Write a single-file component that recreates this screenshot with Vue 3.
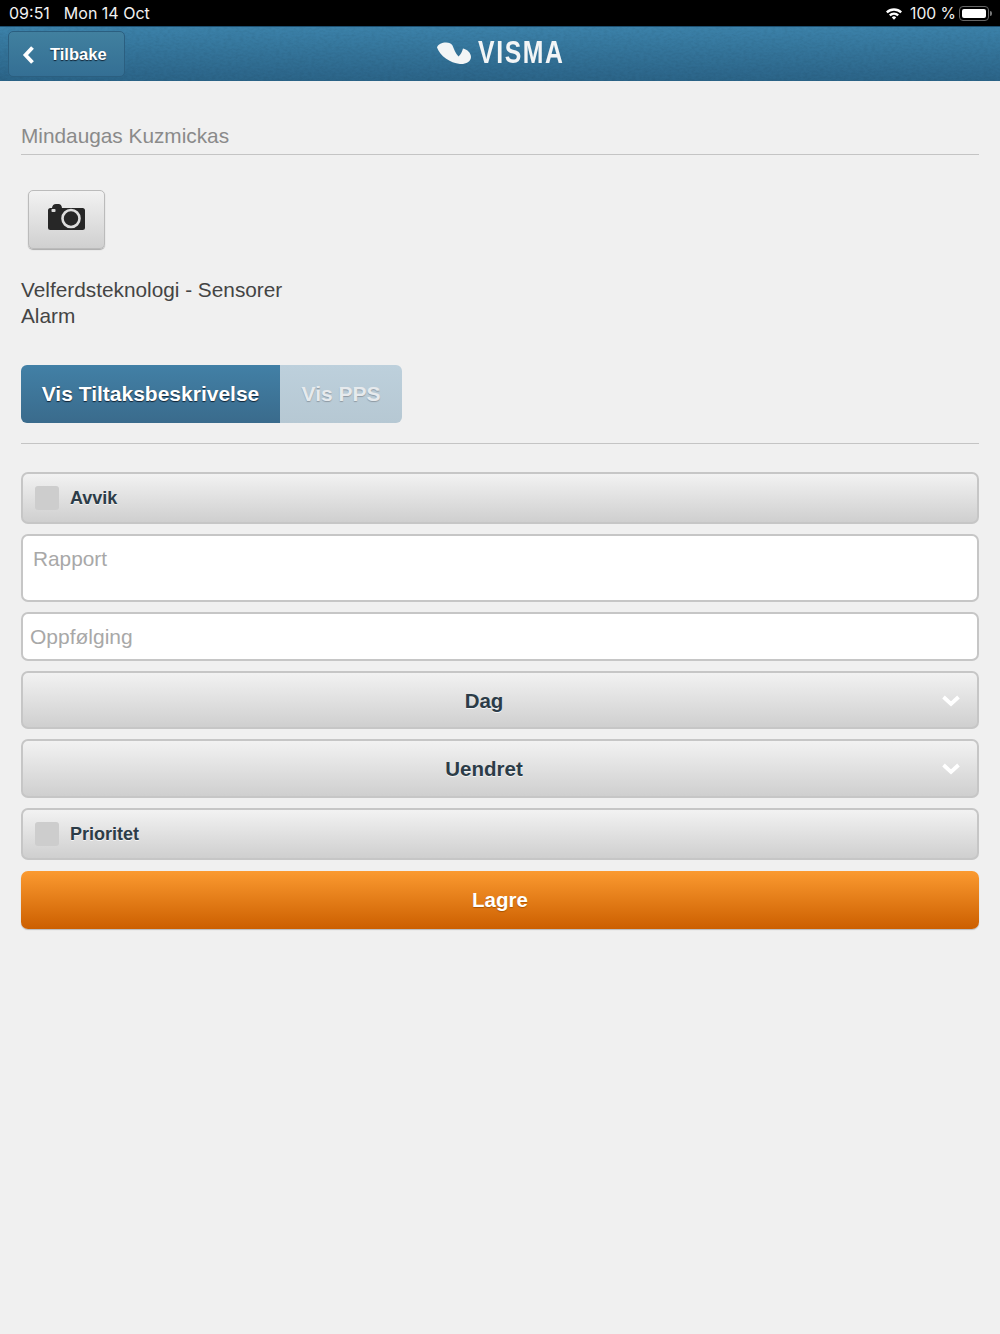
<template>
  <div class="page">
    <div class="status-bar">
      <div class="status-left">
        <span>09:51</span>
        <span>Mon 14 Oct</span>
      </div>
      <div class="status-right">
        <svg class="wifi" width="18" height="13" viewBox="0 0 18 13">
          <path d="M1 4.6 A11.5 11.5 0 0 1 17 4.6 L15.4 6.3 A9.2 9.2 0 0 0 2.6 6.3 Z" fill="#fff" />
          <path d="M4 7.6 A7.2 7.2 0 0 1 14 7.6 L12.4 9.3 A5 5 0 0 0 5.6 9.3 Z" fill="#fff" />
          <path d="M6.8 10.4 A3.2 3.2 0 0 1 11.2 10.4 L9 12.8 Z" fill="#fff" />
        </svg>
        <span class="battery-text">100 %</span>
        <div class="battery">
          <div class="battery-fill"></div>
        </div>
        <div class="battery-tip"></div>
      </div>
    </div>

    <header class="header">
      <svg class="grain" width="1000" height="54">
        <filter id="grain">
          <feTurbulence type="fractalNoise" baseFrequency="0.25 0.5" numOctaves="2" seed="4" />
          <feColorMatrix type="matrix" values="0 0 0 0 0  0 0 0 0 0  0 0 0 0 0  0 0 0 1.4 -0.5" />
        </filter>
        <rect width="1000" height="54" filter="url(#grain)" />
      </svg>
      <button class="back-button">
        <svg width="13" height="18" viewBox="0 0 13 18">
          <path d="M10.5 1.5 L3.5 9 L10.5 16.5" fill="none" stroke="#fff" stroke-width="3.8" />
        </svg>
        <span>Tilbake</span>
      </button>
      <div class="logo">
        <svg width="34" height="24" viewBox="0 0 34 24">
          <path d="M0 6.500 C1 3 5 1.500 9 1.500 C12 1.500 14.500 2.500 15.500 4.500 C17 8 18.500 12.500 21.500 15.500 C23.500 14 25 11 26 7.500 C30.500 8.500 34 12 34 16 C34 21 28 23.500 23 23 C13 22 3 15 0 6.500 Z" fill="#f3f5f6" />
        </svg>
        <span class="logo-text">VISMA</span>
      </div>
    </header>

    <main class="content">
      <div class="name">Mindaugas Kuzmickas</div>

      <button class="camera-button">
        <svg width="37" height="27" viewBox="0 0 37 27">
          <path d="M2.500 5 H4 Q4.500 1 8 1 H10.500 Q13.500 1 14 5 H34.500 Q37 5 37 7.500 V24.500 Q37 27 34.500 27 H2.500 Q0 27 0 24.500 V7.500 Q0 5 2.500 5 Z" fill="#272727" />
          <rect x="3.500" y="6" width="4" height="3" rx="0.8" fill="#ddd" />
          <circle cx="23" cy="15.500" r="8.500" fill="none" stroke="#dedede" stroke-width="2.600" />
        </svg>
      </button>

      <div class="task">
        <div>Velferdsteknologi - Sensorer</div>
        <div>Alarm</div>
      </div>

      <div class="tabs">
        <button class="tab active">Vis Tiltaksbeskrivelse</button>
        <button class="tab inactive">Vis PPS</button>
      </div>

      <hr class="divider" />

      <form class="form" @submit.prevent>
        <div class="check-row">
          <span class="checkbox"></span>
          <span>Avvik</span>
        </div>
        <div class="field report">Rapport</div>
        <div class="field followup">Oppfølging</div>
        <div v-for="item in selects" :key="item" class="select-row">
          <span class="select-label">{{ item }}</span>
          <svg class="chevron" width="20" height="14" viewBox="0 0 20 14">
            <path d="M2.500 3 L10 10 L17.500 3" fill="none" stroke="#fff" stroke-width="3.800" />
          </svg>
        </div>
        <div class="check-row">
          <span class="checkbox"></span>
          <span>Prioritet</span>
        </div>
        <button class="save-button">Lagre</button>
      </form>
    </main>
  </div>
</template>

<script setup>
const selects = ['Dag', 'Uendret'];
</script>

<style>
html,
body {
  margin: 0;
  background: #f0f0f0;
}
</style>

<style scoped>
.page {
  min-height: 1334px;
  background: #f0f0f0;
  font-family: "Liberation Sans", Arial, sans-serif;
  color: #333;
}

.status-bar {
  height: 26px;
  background: #000;
  color: #f2f2f2;
  font-family: Inter, "Liberation Sans", sans-serif;
  font-size: 16px;
  display: flex;
  justify-content: space-between;
  align-items: center;
  padding: 0 8px 0 9px;
}

.status-left {
  display: flex;
  gap: 14px;
}

.status-right {
  display: flex;
  align-items: center;
}

.wifi {
  margin-right: 7px;
}

.battery-text {
  margin-right: 3px;
  font-size: 15.700px;
}

.battery {
  box-sizing: border-box;
  width: 30px;
  height: 15px;
  border: 1px solid #666;
  border-radius: 4px;
  padding: 2px;
}

.battery-fill {
  height: 100%;
  background: #fff;
  border-radius: 2px;
}

.battery-tip {
  width: 2px;
  height: 5px;
  margin-left: 1px;
  border-radius: 0 2px 2px 0;
  background: #777;
}

.header {
  position: relative;
  height: 54px;
  border-top: 1px solid #1d4f70;
  background: linear-gradient(#3c82aa, #2b6488);
  display: flex;
  align-items: center;
  justify-content: center;
}

.grain {
  position: absolute;
  left: 0;
  top: 0;
  opacity: 0.08;
}

.back-button {
  position: absolute;
  left: 8px;
  top: 4px;
  width: 117px;
  height: 46px;
  box-sizing: border-box;
  border: 1px solid #2b5f80;
  border-radius: 5px;
  background: linear-gradient(#41809f, #346f94);
  color: #fff;
  font-family: inherit;
  font-size: 16.500px;
  font-weight: bold;
  text-shadow: 0 1px 1px #123;
  display: flex;
  align-items: center;
  gap: 15px;
  padding: 1px 0 0 13px;
}

.logo {
  position: relative;
  display: flex;
  align-items: center;
  gap: 7px;
  margin-top: -3px;
  padding-right: 1px;
}

.logo-text {
  display: inline-block;
  width: 85px;
  font-size: 31px;
  line-height: 30px;
  font-weight: bold;
  letter-spacing: 2px;
  color: #f3f5f6;
  transform: scaleX(0.8);
  transform-origin: left center;
  white-space: nowrap;
}

.content {
  padding: 42px 21px 0;
}

.name {
  font-size: 20.800px;
  line-height: 26px;
  color: #8a8a8a;
  padding-bottom: 5px;
  border-bottom: 1px solid #c4c4c4;
}

.camera-button {
  display: flex;
  align-items: center;
  justify-content: center;
  width: 77px;
  height: 59px;
  margin: 35px 0 0 7px;
  padding: 0 0 6px;
  border: 1px solid #bbb;
  border-radius: 5px;
  background: linear-gradient(#f2f2f2, #d0d0d0);
  box-shadow: 0 1px 1px #aaa;
}

.task {
  margin-top: 28px;
  font-size: 20.800px;
  line-height: 26px;
  color: #444;
}

.tabs {
  display: flex;
  margin-top: 36px;
}

.tab {
  height: 58px;
  border: none;
  padding: 0;
  font-family: inherit;
  font-size: 21px;
  font-weight: bold;
  white-space: nowrap;
}

.tab.active {
  width: 259px;
  color: #fff;
  background: linear-gradient(#4280a6, #3a6b8c);
  border-radius: 6px 0 0 6px;
  text-shadow: 0 1px 1px #123;
}

.tab.inactive {
  width: 122px;
  color: #e6eaed;
  background: linear-gradient(#bdd0dc, #b6c8d3);
  border-radius: 0 6px 6px 0;
  text-shadow: 0 1px 1px #8f9aa3;
}

.divider {
  margin: 20px 0 28px;
  border: none;
  border-top: 1px solid #c4c4c4;
}

.form {
  display: flex;
  flex-direction: column;
  gap: 10px;
}

.check-row,
.select-row {
  box-sizing: border-box;
  border: 2px solid #c6c6c6;
  border-radius: 7px;
  background: linear-gradient(#f2f2f2, #cfcfcf);
  color: #2c3c48;
  font-size: 18px;
  font-weight: bold;
  text-shadow: 0 1px 0 #f4f4f4;
}

.check-row {
  height: 52px;
  display: flex;
  align-items: center;
  gap: 11px;
  padding-left: 12px;
}

.checkbox {
  width: 24px;
  height: 24px;
  border-radius: 3px;
  background: #cdcdcd;
}

.field {
  box-sizing: border-box;
  background: #fff;
  border: 2px solid #c6c6c6;
  border-radius: 7px;
  color: #a8a8a8;
  font-size: 21px;
}

.report {
  height: 68px;
  padding: 11px 10px;
  font-size: 20.800px;
}

.followup {
  height: 49px;
  padding: 11px 7px;
}

.select-row {
  position: relative;
  height: 58px;
  display: flex;
  align-items: center;
  justify-content: center;
  font-size: 20.500px;
  padding: 1px 32px 0 0;
}

.select-row + .select-row {
  height: 59px;
}

.chevron {
  position: absolute;
  right: 16px;
  top: 21px;
}

.save-button {
  height: 58px;
  margin-top: 1px;
  border: none;
  border-radius: 7px;
  background: linear-gradient(#fb9a30, #cc5f00);
  box-shadow: 0 1px 1px #bbb;
  color: #fff;
  font-family: inherit;
  font-size: 20.500px;
  font-weight: bold;
  text-shadow: 0 1px 1px #a50;
}
</style>
